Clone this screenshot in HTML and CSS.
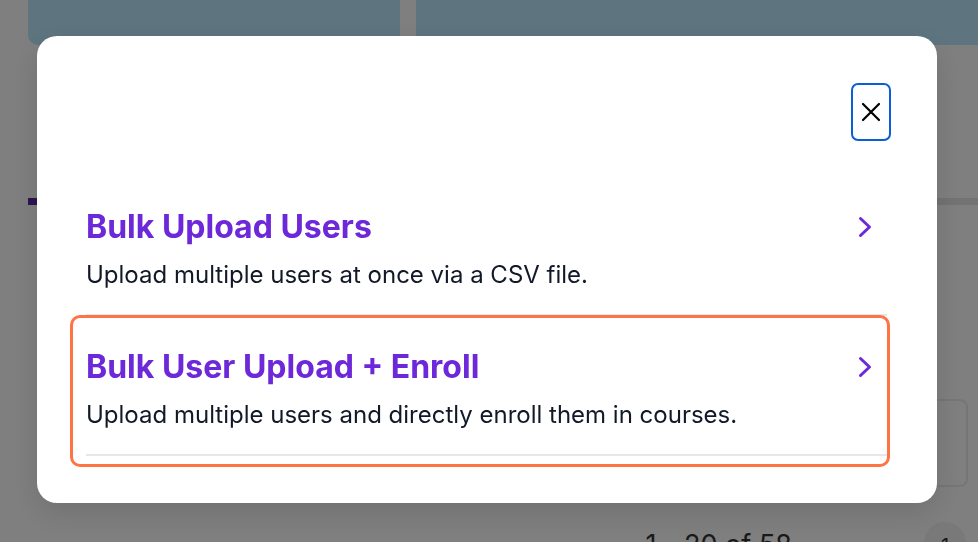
FILE: index.html
```html
<!DOCTYPE html>
<html lang="en">
<head>
<meta charset="utf-8">
<title>Bulk upload</title>
<link rel="stylesheet" href="styles.css">
</head>
<body>
<div class="page">
  <div class="cards">
    <div class="card card-small"></div>
    <div class="card card-wide"></div>
  </div>
  <div class="tabs">
    <div class="tab-active"></div>
    <div class="tab-rest"></div>
  </div>
  <div class="toolbar">
    <div class="search"></div>
  </div>
  <div class="pagination">
    <span class="pg-text">1 - 20 of 58</span>
    <span class="pg-btn">1</span>
  </div>
</div>
<div class="backdrop"></div>
<div class="modal" role="dialog">
  <div class="modal-header">
    <button class="close-btn" aria-label="Close">
      <svg width="20" height="20" viewBox="0 0 20 20"><path d="M2 2 L18 18 M18 2 L2 18" stroke="#000" stroke-width="2.2" stroke-linecap="round" fill="none"/></svg>
    </button>
  </div>
  <div class="options">
    <a class="option" href="#">
      <div class="option-inner">
        <div class="option-text">
          <div class="option-title">Bulk Upload Users</div>
          <div class="option-desc">Upload multiple users at once via a CSV file.</div>
        </div>
        <svg class="chevron" width="14" height="22" viewBox="0 0 14 22"><path d="M2.5 2.5 L11.5 11 L2.5 19.5" stroke="#6d28d9" stroke-width="3" stroke-linecap="round" stroke-linejoin="round" fill="none"/></svg>
      </div>
    </a>
    <a class="option focused" href="#">
      <div class="option-inner">
        <div class="option-text">
          <div class="option-title">Bulk User Upload + Enroll</div>
          <div class="option-desc">Upload multiple users and directly enroll them in courses.</div>
        </div>
        <svg class="chevron" width="14" height="22" viewBox="0 0 14 22"><path d="M2.5 2.5 L11.5 11 L2.5 19.5" stroke="#6d28d9" stroke-width="3" stroke-linecap="round" stroke-linejoin="round" fill="none"/></svg>
      </div>
    </a>
  </div>
</div>
</body>
</html>
```
FILE: styles.css
```css
* { box-sizing: border-box; }
html, body { margin: 0; padding: 0; }
body {
  background: #ffffff;
  font-family: Inter, "Liberation Sans", sans-serif;
  overflow: hidden;
  width: 978px;
  height: 542px;
}
.page {
  width: 978px;
  height: 542px;
  overflow: hidden;
}
.cards {
  display: flex;
  gap: 16px;
  padding-left: 28px;
  margin-right: -30px;
  height: 45px;
}
.card {
  height: 45px;
  background: #bce8ff;
  border-radius: 0 0 10px 10px;
}
.card-small { width: 372px; }
.card-wide { flex: 1; }
.tabs {
  display: flex;
  margin-top: 153px;
  padding-left: 28px;
  height: 7px;
}
.tab-active { width: 120px; background: #5a28a0; }
.tab-rest { flex: 1; background: #e6e6e6; }
.toolbar {
  display: flex;
  justify-content: flex-end;
  margin-top: 194px;
  padding-right: 10px;
}
.search {
  width: 320px;
  height: 88px;
  border: 2px solid #ececec;
  border-radius: 8px;
}
.pagination {
  display: flex;
  align-items: flex-start;
  justify-content: flex-end;
  gap: 132px;
  margin-top: 35px;
  padding-right: 12px;
}
.pg-text {
  margin-top: 6px;
  font-size: 27px;
  color: #333;
}
.pg-btn {
  width: 42px;
  height: 42px;
  border-radius: 50%;
  background: #f2f2f2;
  display: flex;
  justify-content: center;
  padding-top: 12px;
  font-size: 20px;
  color: #333;
}
.backdrop {
  position: fixed;
  inset: 0;
  background: rgba(0, 0, 0, 0.5);
}
.modal {
  position: fixed;
  left: 37px;
  top: 36px;
  width: 900px;
  height: 467px;
  background: #ffffff;
  border-radius: 20px;
  box-shadow: 0 10px 30px rgba(0, 0, 0, 0.12);
  padding: 47px 46px 36px 33px;
  display: flex;
  flex-direction: column;
}
.modal-header {
  display: flex;
  justify-content: flex-end;
}
.close-btn {
  width: 40px;
  height: 58px;
  border: 2.5px solid #0b5ed7;
  border-radius: 7px;
  background: #fff;
  padding: 0;
  display: flex;
  align-items: center;
  justify-content: center;
  cursor: pointer;
}
.options {
  display: flex;
  flex-direction: column;
  margin-top: 34px;
}
.option {
  display: block;
  text-decoration: none;
  border: 3px solid transparent;
  border-radius: 10px;
  padding: 0 0 8px 13px;
  width: 820px;
}
.option + .option { margin-top: -12px; }
.option.focused {
  border-color: #ff7443;
  position: relative;
}
.option-inner {
  display: flex;
  align-items: flex-start;
  justify-content: space-between;
  border-bottom: 2px solid #e5e7eb;
  padding: 29px 15px 23px 0;
}
.option-title {
  font-size: 32px;
  line-height: 40px;
  font-weight: 700;
  color: #6d28d9;
}
.option-desc {
  margin-top: 12px;
  font-size: 24px;
  line-height: 32px;
  color: #111827;
}
.chevron {
  margin-top: 9px;
}
```
